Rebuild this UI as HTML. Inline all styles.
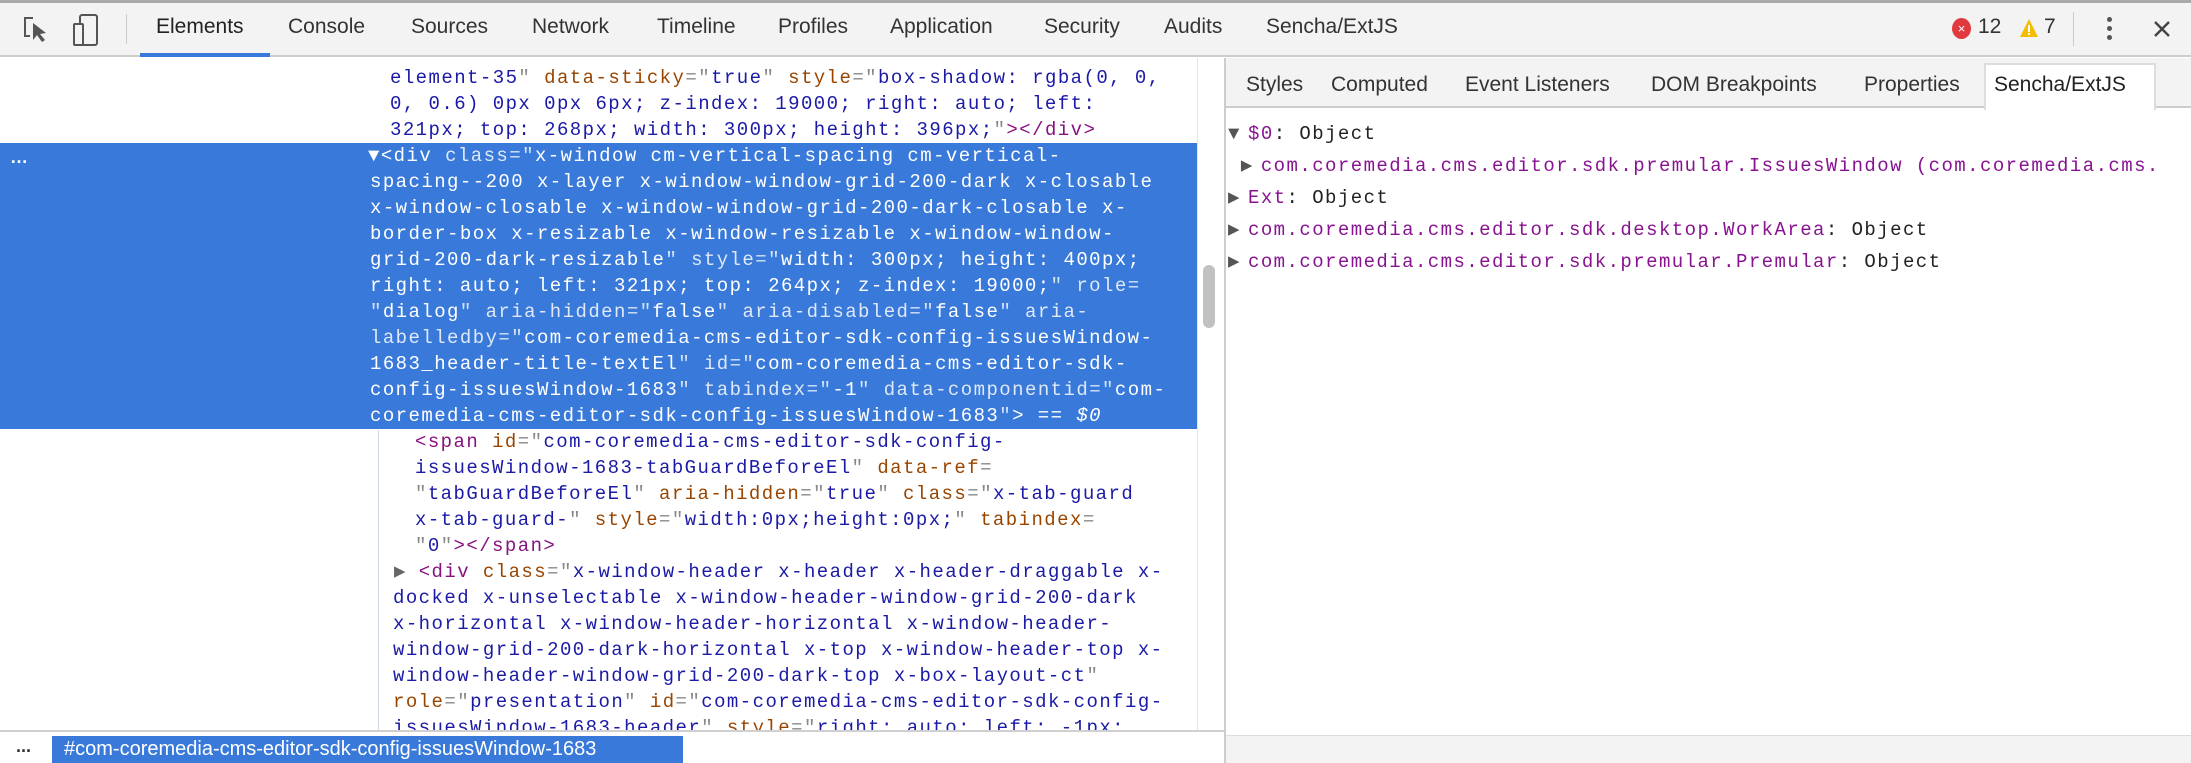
<!DOCTYPE html>
<html><head><meta charset="utf-8"><style>
*{margin:0;padding:0;box-sizing:border-box}
body{width:2191px;height:763px;overflow:hidden;background:#fff;position:relative;font-family:"Liberation Sans",sans-serif}
.a{position:absolute;white-space:pre}
.m{font-family:"Liberation Mono",monospace;font-size:19px;letter-spacing:1.44px;line-height:26px}
.t{font-size:21px;color:#333;top:15px}
.st{font-size:21px;color:#333;top:73px}
.tg{color:#881280}.an{color:#994500}.av{color:#1a1aa6}.q{color:#888}
.sel .tg,.sel .an,.sel .av,.sel .q{color:#fff}
.sel .q{color:#d6e3f7}.sel .an{color:#dfe8f8}
.pu{color:#881391}
</style></head><body>
<!-- toolbar -->
<div class="a" style="left:0;top:0;width:2191px;height:57px;background:#f3f3f3;border-bottom:2px solid #cdcdcd"></div>
<div class="a" style="left:0;top:0;width:2191px;height:3px;background:#a9a9a9"></div>
<svg class="a" style="left:20px;top:14px" width="32" height="32" viewBox="0 0 32 32"><path d="M13 4H5v18h5" fill="none" stroke="#555" stroke-width="2"/><path d="M13 9l0 17 4-5 5 7 3-2-5-6 6-1z" fill="#555"/></svg>
<svg class="a" style="left:72px;top:13px" width="30" height="34" viewBox="0 0 30 34"><rect x="8" y="2" width="17" height="30" rx="2" fill="none" stroke="#555" stroke-width="2"/><rect x="2" y="11" width="9" height="21" rx="1" fill="#f3f3f3" stroke="#555" stroke-width="2"/></svg>
<div class="a" style="left:126px;top:14px;width:1px;height:30px;background:#ccc"></div>
<div class="a t" style="left:156px;color:#222">Elements</div>
<div class="a" style="left:140px;top:53px;width:130px;height:4px;background:#3879d9"></div>
<div class="a t" style="left:288px">Console</div>
<div class="a t" style="left:411px">Sources</div>
<div class="a t" style="left:532px">Network</div>
<div class="a t" style="left:657px">Timeline</div>
<div class="a t" style="left:778px">Profiles</div>
<div class="a t" style="left:890px">Application</div>
<div class="a t" style="left:1044px">Security</div>
<div class="a t" style="left:1164px">Audits</div>
<div class="a t" style="left:1266px">Sencha/ExtJS</div>
<div class="a" style="left:1952px;top:18px;width:19px;height:21px;border-radius:50%;background:#e0393e;color:#fff;font-size:13px;text-align:center;line-height:21px">×</div>
<div class="a t" style="left:1978px">12</div>
<svg class="a" style="left:2019px;top:18px" width="20" height="20" viewBox="0 0 20 20"><path d="M10 1L19 19H1z" fill="#f4bd00"/><rect x="9" y="7" width="2" height="7" fill="#fff"/><rect x="9" y="15" width="2" height="2" fill="#fff"/></svg>
<div class="a t" style="left:2044px">7</div>
<div class="a" style="left:2073px;top:12px;width:1px;height:34px;background:#ccc"></div>
<div class="a" style="left:2107px;top:17px;width:5px;height:5px;border-radius:50%;background:#555;box-shadow:0 9px 0 #555,0 18px 0 #555"></div>
<svg class="a" style="left:2153px;top:20px" width="18" height="18" viewBox="0 0 18 18"><path d="M2 2L16 16M16 2L2 16" stroke="#444" stroke-width="2.4"/></svg>

<!-- left pane -->
<div class="a" style="left:0;top:143px;width:1197px;height:286px;background:#3879d9"></div>
<div class="a" style="left:10px;top:147px;color:#fff;font-size:18px;font-weight:bold">…</div>
<div class="a" style="left:378px;top:430px;width:1px;height:300px;background:#cfd8e6"></div>
<div class="a" style="left:1197px;top:58px;width:1px;height:673px;background:#e6e6e6"></div>
<div class="a" style="left:1203px;top:265px;width:12px;height:63px;border-radius:6px;background:#c1c1c1"></div>
<div class="a" style="left:1224px;top:58px;width:2px;height:705px;background:#cdcdcd"></div>

<div class="a m" style="left:390px;top:65px"><span class="av">element-35</span><span class="q">"</span> <span class="an">data-sticky</span><span class="q">="</span><span class="av">true</span><span class="q">"</span> <span class="an">style</span><span class="q">="</span><span class="av">box-shadow: rgba(0, 0,
0, 0.6) 0px 0px 6px; z-index: 19000; right: auto; left:
321px; top: 268px; width: 300px; height: 396px;</span><span class="q">"</span><span class="tg">&gt;&lt;/div&gt;</span></div>

<div class="a m sel" style="left:368px;top:143px;color:#fff">▼<span class="tg">&lt;div</span> <span class="an">class</span><span class="q">="</span>x-window cm-vertical-spacing cm-vertical-</div>
<div class="a m sel" style="left:370px;top:169px;color:#fff">spacing--200 x-layer x-window-window-grid-200-dark x-closable
x-window-closable x-window-window-grid-200-dark-closable x-
border-box x-resizable x-window-resizable x-window-window-
grid-200-dark-resizable<span class="q">"</span> <span class="an">style</span><span class="q">="</span>width: 300px; height: 400px;
right: auto; left: 321px; top: 264px; z-index: 19000;<span class="q">"</span> <span class="an">role</span><span class="q">=</span>
<span class="q">"</span>dialog<span class="q">"</span> <span class="an">aria-hidden</span><span class="q">="</span>false<span class="q">"</span> <span class="an">aria-disabled</span><span class="q">="</span>false<span class="q">"</span> <span class="an">aria-</span>
<span class="an">labelledby</span><span class="q">="</span>com-coremedia-cms-editor-sdk-config-issuesWindow-
1683_header-title-textEl<span class="q">"</span> <span class="an">id</span><span class="q">="</span>com-coremedia-cms-editor-sdk-
config-issuesWindow-1683<span class="q">"</span> <span class="an">tabindex</span><span class="q">="</span>-1<span class="q">"</span> <span class="an">data-componentid</span><span class="q">="</span>com-
coremedia-cms-editor-sdk-config-issuesWindow-1683<span class="q">"</span><span class="tg">&gt;</span> == <i>$0</i></div>

<div class="a m" style="left:415px;top:429px"><span class="tg">&lt;span</span> <span class="an">id</span><span class="q">="</span><span class="av">com-coremedia-cms-editor-sdk-config-</span>
<span class="av">issuesWindow-1683-tabGuardBeforeEl</span><span class="q">"</span> <span class="an">data-ref</span><span class="q">=</span>
<span class="q">"</span><span class="av">tabGuardBeforeEl</span><span class="q">"</span> <span class="an">aria-hidden</span><span class="q">="</span><span class="av">true</span><span class="q">"</span> <span class="an">class</span><span class="q">="</span><span class="av">x-tab-guard</span>
<span class="av">x-tab-guard-</span><span class="q">"</span> <span class="an">style</span><span class="q">="</span><span class="av">width:0px;height:0px;</span><span class="q">"</span> <span class="an">tabindex</span><span class="q">=</span>
<span class="q">"</span><span class="av">0</span><span class="q">"</span><span class="tg">&gt;&lt;/span&gt;</span></div>
<div class="a m" style="left:394px;top:559px;color:#666">▶</div>
<div class="a m" style="left:393px;top:559px;height:172px;overflow:hidden">  <span class="tg">&lt;div</span> <span class="an">class</span><span class="q">="</span><span class="av">x-window-header x-header x-header-draggable x-</span>
<span class="av">docked x-unselectable x-window-header-window-grid-200-dark</span>
<span class="av">x-horizontal x-window-header-horizontal x-window-header-</span>
<span class="av">window-grid-200-dark-horizontal x-top x-window-header-top x-</span>
<span class="av">window-header-window-grid-200-dark-top x-box-layout-ct</span><span class="q">"</span>
<span class="an">role</span><span class="q">="</span><span class="av">presentation</span><span class="q">"</span> <span class="an">id</span><span class="q">="</span><span class="av">com-coremedia-cms-editor-sdk-config-</span>
<span class="av">issuesWindow-1683-header</span><span class="q">"</span> <span class="an">style</span><span class="q">="</span><span class="av">right: auto; left: -1px;</span></div>

<!-- bottom bar -->
<div class="a" style="left:0;top:730px;width:1224px;height:33px;background:#fff;border-top:2px solid #d0d0d0"></div>
<div class="a" style="left:16px;top:736px;font-size:18px;font-weight:bold;color:#333">...</div>
<div class="a" style="left:52px;top:736px;width:631px;height:27px;background:#3879d9;color:#fff;font-size:20px;line-height:27px;padding-left:12px">#com-coremedia-cms-editor-sdk-config-issuesWindow-1683</div>
<div class="a" style="left:1226px;top:735px;width:965px;height:28px;background:#f3f3f3;border-top:1px solid #ddd"></div>

<!-- right pane -->
<div class="a" style="left:1226px;top:58px;width:965px;height:50px;background:#f3f3f3;border-bottom:2px solid #cdcdcd"></div>
<div class="a" style="left:1984px;top:63px;width:172px;height:47px;background:#fff;border:2px solid #ddd;border-bottom:none"></div>
<div class="a st" style="left:1246px">Styles</div>
<div class="a st" style="left:1331px">Computed</div>
<div class="a st" style="left:1465px">Event Listeners</div>
<div class="a st" style="left:1651px">DOM Breakpoints</div>
<div class="a st" style="left:1864px">Properties</div>
<div class="a st" style="left:1994px;color:#222">Sencha/ExtJS</div>

<div class="a m" style="left:1228px;top:118px;line-height:32px;color:#555">▼
 ▶
▶
▶
▶</div>
<div class="a m" style="left:1248px;top:118px;line-height:32px;color:#222"><span class="pu">$0</span>: Object
 <span class="pu">com.coremedia.cms.editor.sdk.premular.IssuesWindow (com.coremedia.cms.</span>
<span class="pu">Ext</span>: Object
<span class="pu">com.coremedia.cms.editor.sdk.desktop.WorkArea</span>: Object
<span class="pu">com.coremedia.cms.editor.sdk.premular.Premular</span>: Object</div>
</body></html>
